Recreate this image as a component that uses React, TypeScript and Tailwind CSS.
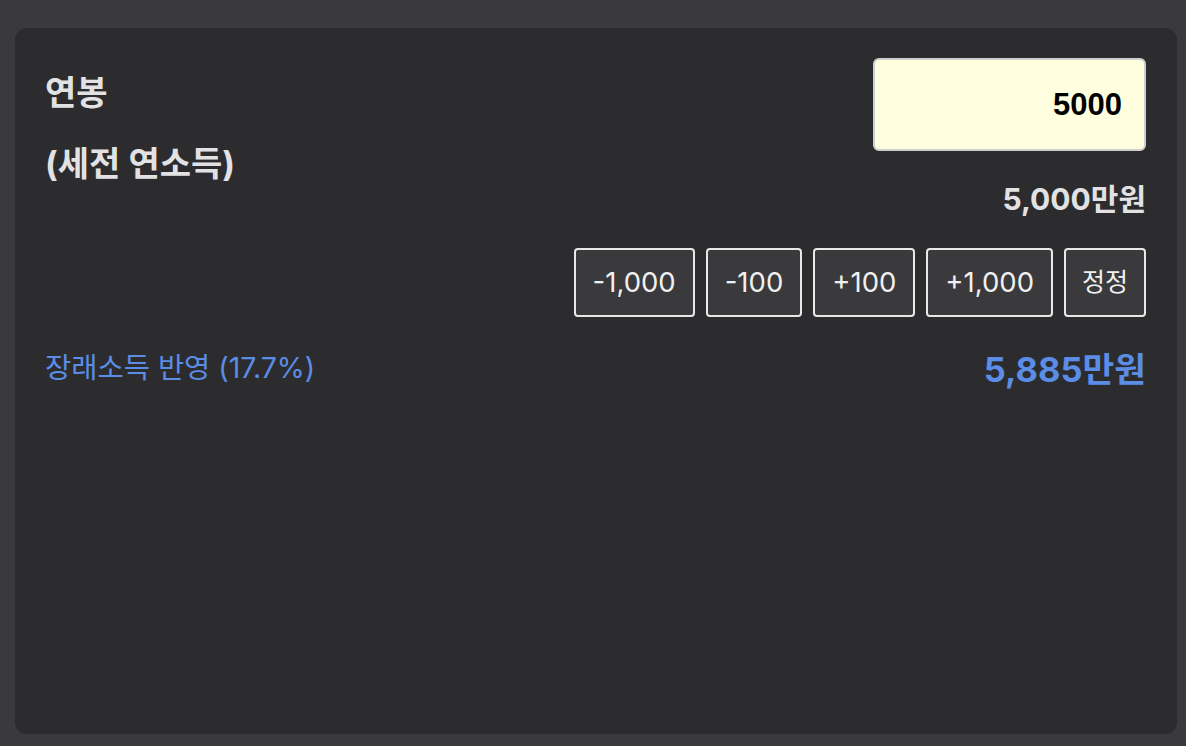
import { useState } from "react";

const steps = [
  { label: "-1,000", delta: -1000 },
  { label: "-100", delta: -100 },
  { label: "+100", delta: 100 },
  { label: "+1,000", delta: 1000 },
];

export default function App() {
  const [salary, setSalary] = useState(5000);
  const future = Math.round(salary * 1.177);

  return (
    <div
      className="min-h-screen bg-[#3a3a3c] pl-[15px] pr-[9px] pt-[28px] pb-[12px]"
      style={{ fontFamily: 'Inter, "Noto Sans CJK KR", sans-serif' }}
    >
      <div className="h-[706px] rounded-xl bg-[#2c2c2e] pl-[30px] pr-[31px] pt-[30px]">
        <div className="flex justify-between">
          {/* label column */}
          <div className="pt-[15px] text-[34px] font-bold leading-[40px] text-[#e2e2e4]">
            <div>연봉</div>
            <div className="mt-[31px]">(세전 연소득)</div>
          </div>

          {/* input column */}
          <div className="flex flex-col items-end">
            <input
              value={salary}
              onChange={(e) => setSalary(Number(e.target.value) || 0)}
              className="h-[93px] w-[273px] rounded-md border-2 border-[#cfcfcf] bg-[#ffffe0] pr-[22px] text-right text-[31px] font-bold text-black outline-none"
              style={{ fontFamily: '"Liberation Sans", Arial, sans-serif' }}
            />
            <div className="mt-[28px] text-[30px] font-bold leading-[40px] text-[#e2e2e4]">
              {salary.toLocaleString()}만원
            </div>
            <div className="mt-[29px] flex gap-[11px]">
              {steps.map((s) => (
                <button
                  key={s.label}
                  onClick={() => setSalary((v) => v + s.delta)}
                  className="h-[69px] rounded-[4px] border-2 border-[#e8e8e8] bg-[#3a3a3c] px-[17px] text-[27.5px] text-[#f0f0f0]"
                >
                  {s.label}
                </button>
              ))}
              <button className="h-[69px] rounded-[4px] border-2 border-[#e8e8e8] bg-[#3a3a3c] px-[16px] text-[25px] text-[#f0f0f0]">
                정정
              </button>
            </div>
          </div>
        </div>

        <div className="mt-[31px] flex items-start justify-between">
          <div className="text-[28.5px] leading-[40px] text-[#5b8ce6]">장래소득 반영 (17.7%)</div>
          <div className="text-[34.5px] font-bold leading-[44px] text-[#5b8ce6]">
            {future.toLocaleString()}만원
          </div>
        </div>
      </div>
    </div>
  );
}
